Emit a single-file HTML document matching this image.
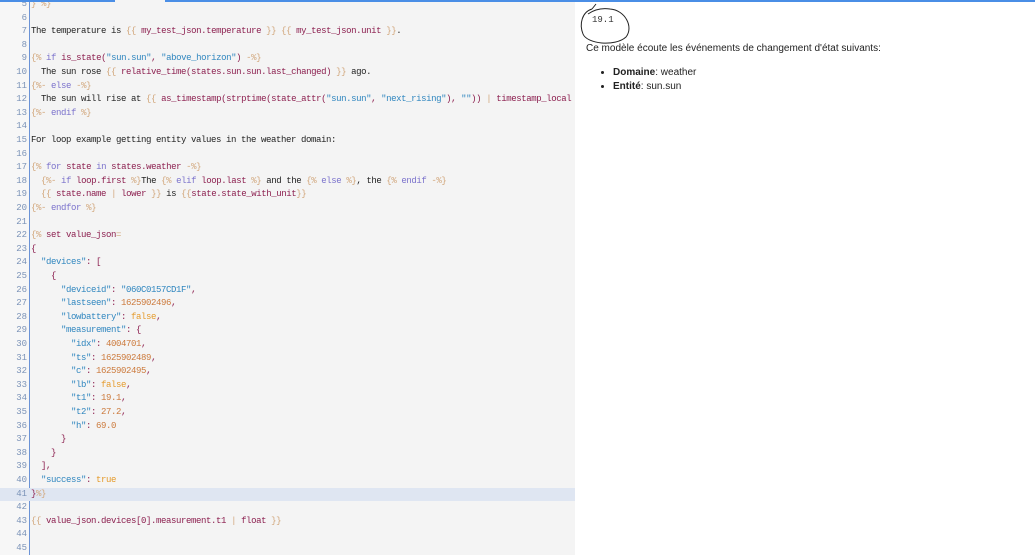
<!DOCTYPE html><html><head><meta charset="utf-8"><style>
body{margin:0;width:1035px;height:555px;overflow:hidden;background:#fff;position:relative;font-family:"Liberation Sans",sans-serif}
#code{position:absolute;left:0;top:0;width:575px;height:555px;background:#f4f4f4;overflow:hidden}
.gut{position:absolute;left:0;top:0;width:29px;height:555px;border-right:1px solid #6b93d6;background:#f7f7f7}
.in{position:absolute;left:0;top:3px;width:575px}
.l{position:absolute;left:0;height:13.6px;line-height:13.6px;font-family:"Liberation Mono",monospace;font-size:9px;letter-spacing:-0.4px;white-space:pre;width:575px;color:#222}
.l .n{display:inline-block;width:27px;text-align:right;color:#7b93b8;margin-right:4px;letter-spacing:0}
.b{color:#d2a77c}.k{color:#7b72cc}.i{color:#8c1f4f}.s{color:#2f86bf}.v{color:#cc7a3c}.f{color:#e59a2a}
.hl{background:#dfe6f2}
.top1{position:absolute;top:0;left:0;width:115px;height:2px;background:#4a8ee6}
.top2{position:absolute;top:0;left:165px;width:870px;height:2px;background:#4a8ee6}
</style></head><body>
<div id="code"><div class="gut"></div><div class="in">
<div class="l" style="top:-5px"><span class="n">5</span><span class="b">} %}</span></div>
<div class="l" style="top:8.6px"><span class="n">6</span></div>
<div class="l" style="top:22.2px"><span class="n">7</span>The temperature is <span class="b">{{</span> <span class="i">my_test_json.temperature</span> <span class="b">}}</span> <span class="b">{{</span> <span class="i">my_test_json.unit</span> <span class="b">}}</span>.</div>
<div class="l" style="top:35.8px"><span class="n">8</span></div>
<div class="l" style="top:49.4px"><span class="n">9</span><span class="b">{%</span> <span class="k">if</span> <span class="i">is_state(</span><span class="s">"sun.sun"</span><span class="i">, </span><span class="s">"above_horizon"</span><span class="i">)</span> <span class="b">-%}</span></div>
<div class="l" style="top:63px"><span class="n">10</span>  The sun rose <span class="b">{{</span> <span class="i">relative_time(states.sun.sun.last_changed)</span> <span class="b">}}</span> ago.</div>
<div class="l" style="top:76.6px"><span class="n">11</span><span class="b">{%-</span> <span class="k">else</span> <span class="b">-%}</span></div>
<div class="l" style="top:90.2px"><span class="n">12</span>  The sun will rise at <span class="b">{{</span> <span class="i">as_timestamp(strptime(state_attr(</span><span class="s">"sun.sun"</span><span class="i">, </span><span class="s">"next_rising"</span><span class="i">), </span><span class="s">""</span><span class="i">))</span> <span class="b">|</span> <span class="i">timestamp_local</span></div>
<div class="l" style="top:103.8px"><span class="n">13</span><span class="b">{%-</span> <span class="k">endif</span> <span class="b">%}</span></div>
<div class="l" style="top:117.4px"><span class="n">14</span></div>
<div class="l" style="top:131px"><span class="n">15</span>For loop example getting entity values in the weather domain:</div>
<div class="l" style="top:144.6px"><span class="n">16</span></div>
<div class="l" style="top:158.2px"><span class="n">17</span><span class="b">{%</span> <span class="k">for</span> <span class="i">state</span> <span class="k">in</span> <span class="i">states.weather</span> <span class="b">-%}</span></div>
<div class="l" style="top:171.8px"><span class="n">18</span>  <span class="b">{%-</span> <span class="k">if</span> <span class="i">loop.first</span> <span class="b">%}</span>The <span class="b">{%</span> <span class="k">elif</span> <span class="i">loop.last</span> <span class="b">%}</span> and the <span class="b">{%</span> <span class="k">else</span> <span class="b">%}</span>, the <span class="b">{%</span> <span class="k">endif</span> <span class="b">-%}</span></div>
<div class="l" style="top:185.4px"><span class="n">19</span>  <span class="b">{{</span> <span class="i">state.name</span> <span class="b">|</span> <span class="i">lower</span> <span class="b">}}</span> is <span class="b">{{</span><span class="i">state.state_with_unit</span><span class="b">}}</span></div>
<div class="l" style="top:199px"><span class="n">20</span><span class="b">{%-</span> <span class="k">endfor</span> <span class="b">%}</span></div>
<div class="l" style="top:212.6px"><span class="n">21</span></div>
<div class="l" style="top:226.2px"><span class="n">22</span><span class="b">{%</span> <span class="i">set value_json</span><span class="b">=</span></div>
<div class="l" style="top:239.8px"><span class="n">23</span><span class="i">{</span></div>
<div class="l" style="top:253.4px"><span class="n">24</span>  <span class="s">"devices"</span><span class="i">: [</span></div>
<div class="l" style="top:267px"><span class="n">25</span>    <span class="i">{</span></div>
<div class="l" style="top:280.6px"><span class="n">26</span>      <span class="s">"deviceid"</span><span class="i">: </span><span class="s">"060C0157CD1F"</span><span class="i">,</span></div>
<div class="l" style="top:294.2px"><span class="n">27</span>      <span class="s">"lastseen"</span><span class="i">: </span><span class="v">1625902496</span><span class="i">,</span></div>
<div class="l" style="top:307.8px"><span class="n">28</span>      <span class="s">"lowbattery"</span><span class="i">: </span><span class="f">false</span><span class="i">,</span></div>
<div class="l" style="top:321.4px"><span class="n">29</span>      <span class="s">"measurement"</span><span class="i">: {</span></div>
<div class="l" style="top:335px"><span class="n">30</span>        <span class="s">"idx"</span><span class="i">: </span><span class="v">4004701</span><span class="i">,</span></div>
<div class="l" style="top:348.6px"><span class="n">31</span>        <span class="s">"ts"</span><span class="i">: </span><span class="v">1625902489</span><span class="i">,</span></div>
<div class="l" style="top:362.2px"><span class="n">32</span>        <span class="s">"c"</span><span class="i">: </span><span class="v">1625902495</span><span class="i">,</span></div>
<div class="l" style="top:375.8px"><span class="n">33</span>        <span class="s">"lb"</span><span class="i">: </span><span class="f">false</span><span class="i">,</span></div>
<div class="l" style="top:389.4px"><span class="n">34</span>        <span class="s">"t1"</span><span class="i">: </span><span class="v">19.1</span><span class="i">,</span></div>
<div class="l" style="top:403px"><span class="n">35</span>        <span class="s">"t2"</span><span class="i">: </span><span class="v">27.2</span><span class="i">,</span></div>
<div class="l" style="top:416.6px"><span class="n">36</span>        <span class="s">"h"</span><span class="i">: </span><span class="v">69.0</span></div>
<div class="l" style="top:430.2px"><span class="n">37</span>      <span class="i">}</span></div>
<div class="l" style="top:443.8px"><span class="n">38</span>    <span class="i">}</span></div>
<div class="l" style="top:457.4px"><span class="n">39</span>  <span class="i">],</span></div>
<div class="l" style="top:471px"><span class="n">40</span>  <span class="s">"success"</span><span class="i">: </span><span class="f">true</span></div>
<div class="l hl" style="top:484.6px"><span class="n">41</span><span class="i">}</span><span class="b">%}</span></div>
<div class="l" style="top:498.2px"><span class="n">42</span></div>
<div class="l" style="top:511.8px"><span class="n">43</span><span class="b">{{</span> <span class="i">value_json.devices[0].measurement.t1</span> <span class="b">|</span> <span class="i">float</span> <span class="b">}}</span></div>
<div class="l" style="top:525.4px"><span class="n">44</span></div>
<div class="l" style="top:539px"><span class="n">45</span></div>
</div></div>
<div class="top1"></div><div class="top2"></div>
<div style="position:absolute;left:592px;top:15px;font-family:'Liberation Mono',monospace;font-size:9px;color:#333">19.1</div>
<svg style="position:absolute;left:575px;top:0" width="60" height="50"><path d="M17 9 C7 12 4 24 8 34 C12 44 40 47 51 37 C59 27 50 10 35 9 C28 8 20 9 13 14 M17 9 L21 4" fill="none" stroke="#222" stroke-width="1"/></svg>
<div style="position:absolute;left:586px;top:43px;font-size:10px;color:#222">Ce modèle écoute les événements de changement d'état suivants:</div>
<ul style="position:absolute;left:588px;top:66px;margin:0;padding-left:25px;font-size:10px;color:#222;line-height:14px">
<li><b>Domaine</b>: weather</li><li><b>Entité</b>: sun.sun</li></ul>
</body></html>
